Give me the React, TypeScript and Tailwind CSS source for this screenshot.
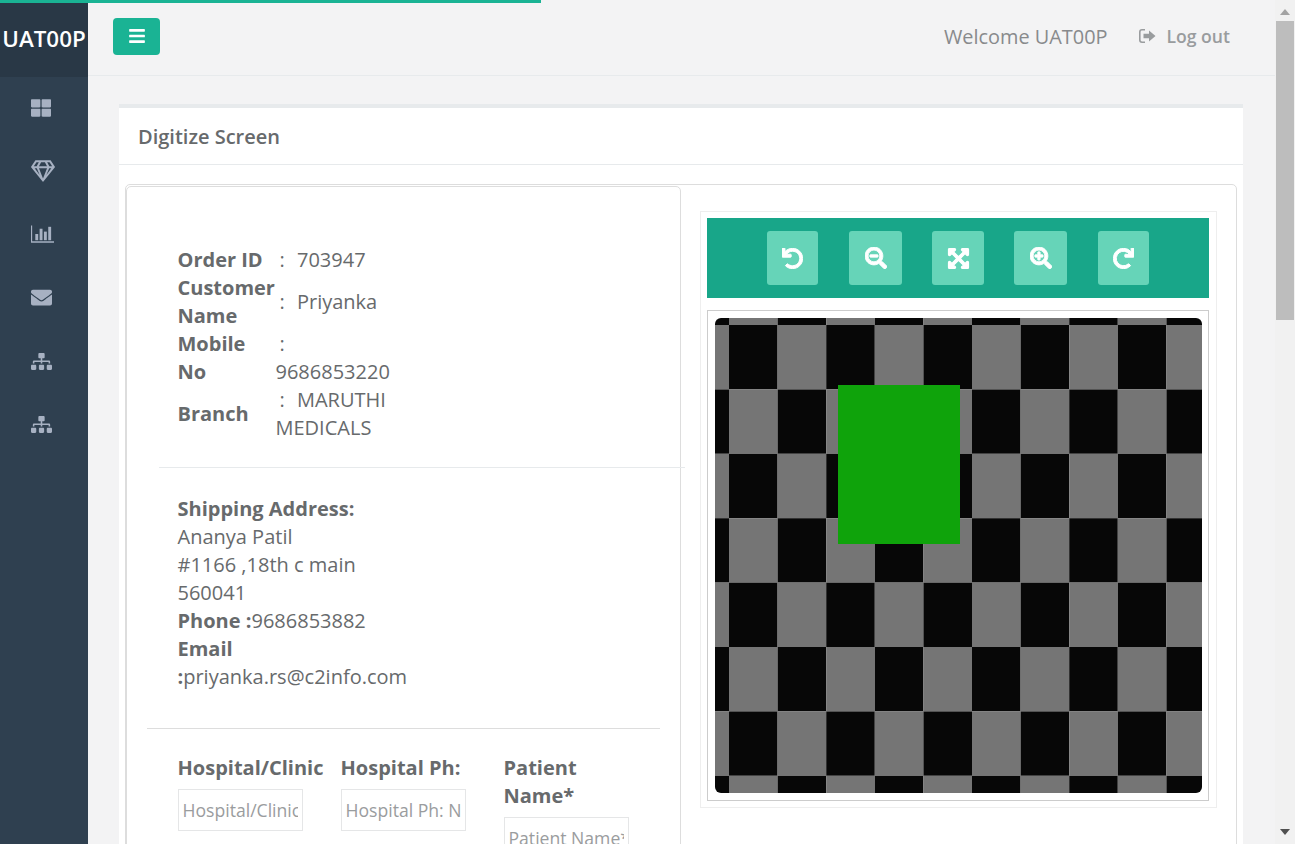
import React from "react";
import { FaThLarge, FaRegGem, FaEnvelope, FaSitemap, FaBars, FaUndo, FaRedo, FaSearchMinus, FaSearchPlus, FaExpandArrowsAlt } from "react-icons/fa";

const ChartIcon = () => (
  <svg width="23" height="18" viewBox="0 0 24 18" fill="currentColor" className="ml-[3px]">
    <path d="M0 0h1.2v16.6H24V18H0z" />
    <rect x="4.5" y="9" width="3" height="6.5" />
    <rect x="9" y="3.5" width="3" height="12" />
    <rect x="13.5" y="6.5" width="3" height="9" />
    <rect x="18" y="1.5" width="3" height="14" />
  </svg>
);

const SignOutIcon = () => (
  <svg width="17" height="14" viewBox="0 0 17 14" fill="currentColor">
    <path d="M6 0H3a3 3 0 0 0-3 3v8a3 3 0 0 0 3 3h3v-1.6H3A1.4 1.4 0 0 1 1.6 11V3A1.4 1.4 0 0 1 3 1.6h3z" />
    <path d="M10 1.5 16.5 7 10 12.5V9.3H4.5V4.7H10z" />
  </svg>
);

const navIcons = [
  <FaThLarge size={20} />,
  <FaRegGem size={24} className="ml-[3px]" />,
  <ChartIcon />,
  <FaEnvelope size={21} />,
  <FaSitemap size={21} />,
  <FaSitemap size={21} />,
];

const tools = [
  { icon: <FaUndo size={21} stroke="currentColor" strokeWidth={24} />, w: "w-[51px]", gap: "" },
  { icon: <FaSearchMinus size={22} stroke="currentColor" strokeWidth={20} />, w: "w-[53px]", gap: "ml-[31px]" },
  { icon: <FaExpandArrowsAlt size={23} stroke="currentColor" strokeWidth={24} />, w: "w-[52px]", gap: "ml-[30px]" },
  { icon: <FaSearchPlus size={22} stroke="currentColor" strokeWidth={20} />, w: "w-[53px]", gap: "ml-[30px]" },
  { icon: <FaRedo size={21} stroke="currentColor" strokeWidth={24} />, w: "w-[51px]", gap: "ml-[31px]" },
];

const Checker = () => {
  const cw = 48.6;
  const ch = 64.4;
  const rects: React.ReactNode[] = [];
  for (let c = 0; c < 11; c++) {
    for (let r = 0; r < 9; r++) {
      const x = 14 + (c - 1) * cw;
      const y = 7 + (r - 1) * ch;
      rects.push(
        <rect key={`${c}-${r}`} x={x} y={y} width={cw} height={ch} fill={(c + r) % 2 === 0 ? "#070707" : "#757575"} />
      );
    }
  }
  return (
    <svg width="487" height="475" viewBox="0 0 487 475" className="block rounded-[6px]">
      {rects}
      <rect x="123" y="67" width="122" height="159" fill="#0fa30b" />
    </svg>
  );
};

const Field = ({ label, ph }: { label: string; ph: string }) => (
  <div className="w-[163px] pr-[38px] shrink-0">
    <div className="font-bold leading-[28px] mb-[7px]">{label}</div>
    <input
      readOnly
      placeholder={ph}
      className="w-[125px] h-[42px] border border-[#e5e6e7] px-[4px] text-[17.6px] outline-none placeholder:text-[#9a9c9e] bg-white"
    />
  </div>
);

const Colon = () => <span className="ml-[4px] mr-[7px]">:</span>;

export default function App() {
  return (
    <div
      className="relative flex h-[844px] w-[1295px] overflow-hidden bg-[#f3f3f4] text-[#676a6c]"
      style={{ fontFamily: '"Open Sans", sans-serif' }}
    >
      <div className="absolute left-0 top-0 z-10 h-[3px] w-[541px] bg-[#1ab394]" />

      <aside className="w-[88px] shrink-0 bg-[#2f4050] text-[#a7b1c2]">
        <div className="flex h-[77px] items-center justify-center bg-[#293846] text-[22.4px] font-semibold text-white">
          UAT00P
        </div>
        <div className="mt-[-1px] pr-[6px]">
          {navIcons.map((icon, i) => (
            <div key={i} className="flex h-[63.4px] items-center justify-center">
              {icon}
            </div>
          ))}
        </div>
      </aside>

      <div className="flex w-[1187px] shrink-0 flex-col">
        <header className="flex h-[76px] shrink-0 items-center border-b border-[#e7eaec] pl-[25px] pr-[45px]">
          <button className="mb-[3px] flex h-[37px] w-[47px] items-center justify-center rounded-[4px] bg-[#1ab394] text-white">
            <FaBars size={18} />
          </button>
          <div className="ml-auto mb-[2px] text-[19.9px] text-[#888a8c]">Welcome UAT00P</div>
          <div className="ml-[31px] mb-[2px] flex items-center gap-[11px] text-[17.6px] font-semibold text-[#999c9e]">
            <SignOutIcon />
            Log out
          </div>
        </header>

        <main className="min-h-0 flex-1 pl-[31px] pr-[32px] pt-[28px]">
          <div className="h-[800px] border-t-4 border-[#e7eaec] bg-white">
            <div className="flex h-[57px] items-center border-b border-[#e7eaec] pl-[19px] pt-[2px] text-[20px] font-semibold">
              Digitize Screen
            </div>
            <div className="pl-[6px] pr-[6px] pt-[19px]">
              <div className="flex h-[700px] rounded-[5px] border border-[#ddd]">
                <section className="mt-[1px] h-[700px] w-[555px] shrink-0 rounded-[5px] border border-[#ddd] text-[20px] leading-[28px]">
                  <table className="ml-[50.5px] mt-[59px] w-[223px] table-fixed border-collapse">
                    <tbody>
                      <tr>
                        <td className="w-[98px] align-middle font-bold">Order ID</td>
                        <td className="align-middle"><Colon /> 703947</td>
                      </tr>
                      <tr>
                        <td className="align-middle font-bold">Customer Name</td>
                        <td className="align-middle"><Colon /> Priyanka</td>
                      </tr>
                      <tr>
                        <td className="align-middle font-bold">Mobile No</td>
                        <td className="align-middle"><Colon /> 9686853220</td>
                      </tr>
                      <tr>
                        <td className="align-middle font-bold">Branch</td>
                        <td className="align-middle"><Colon /> MARUTHI MEDICALS</td>
                      </tr>
                    </tbody>
                  </table>

                  <div className="ml-[32px] mr-[-5px] mt-[25px] border-t border-[#e7eaec]" />

                  <div className="ml-[50.5px] mt-[27px]">
                    <div className="font-bold">Shipping Address:</div>
                    <div>Ananya Patil</div>
                    <div>#1166 ,18th c main</div>
                    <div>560041</div>
                    <div><span className="font-bold">Phone :</span>9686853882</div>
                    <div className="font-bold">Email</div>
                    <div><span className="font-bold">:</span>priyanka.rs@c2info.com</div>
                  </div>

                  <div className="ml-[20px] mr-[20px] mt-[37px] border-t border-[#ddd]" />

                  <div className="ml-[50.5px] mt-[25px] flex items-start">
                    <Field label="Hospital/Clinic" ph="Hospital/Clinic" />
                    <Field label="Hospital Ph:" ph="Hospital Ph: No" />
                    <Field label="Patient Name*" ph="Patient Name*" />
                  </div>
                </section>

                <section className="ml-[19px] mt-[26px] self-start border border-[#eee] pb-[6px] pl-[6px] pr-[7px] pt-[6px]">
                  <div className="flex h-[80px] w-[502px] items-center justify-center bg-[#18a689]">
                    {tools.map((t, i) => (
                      <div
                        key={i}
                        className={`flex h-[54px] items-center justify-center rounded-[3px] bg-[#66d4b8] text-white ${t.w} ${t.gap}`}
                      >
                        {t.icon}
                      </div>
                    ))}
                  </div>
                  <div className="mt-[12px] w-[502px] border border-[#ccc] pb-[7px] pl-[7px] pt-[7px]">
                    <Checker />
                  </div>
                </section>
              </div>
            </div>
          </div>
        </main>
      </div>

      <div className="flex w-[20px] shrink-0 flex-col items-center bg-[#f1f1f1]">
        <svg width="10" height="6" viewBox="0 0 10 6" className="mt-[9px] fill-[#a3a3a3]"><path d="M5 0l5 6H0z" /></svg>
        <div className="mt-[6px] h-[299px] w-[18px] bg-[#bdbdbd]" />
        <svg width="10" height="6" viewBox="0 0 10 6" className="mt-auto mb-[9px] fill-[#505050]"><path d="M0 0h10L5 6z" /></svg>
      </div>
    </div>
  );
}
